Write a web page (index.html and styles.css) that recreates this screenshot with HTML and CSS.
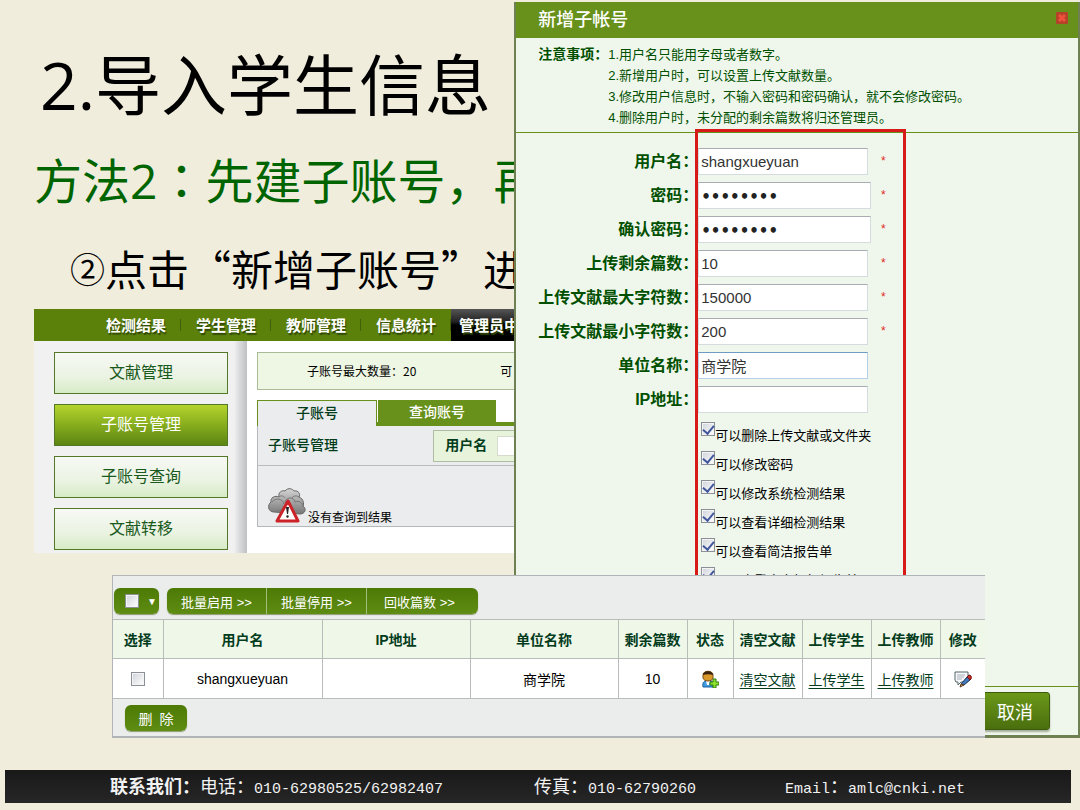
FILE: index.html
```html
<!DOCTYPE html>
<html lang="zh-CN">
<head>
<meta charset="utf-8">
<title>导入学生信息</title>
<link rel="stylesheet" href="styles.css">
</head>
<body>
<main class="slide">
  <section class="lesson">
    <h1 class="title">2.导入学生信息</h1>
    <h2 class="method">方法2<span class="colon" lang="zh-TW">：</span>先建子账号，再</h2>
    <p class="step"><span class="step-no">②</span><span>点击“新增子账号”进</span></p>

    <div class="app">
      <nav class="nav">
        <a class="nav-item" href="#">检测结果</a>
        <a class="nav-item" href="#">学生管理</a>
        <a class="nav-item" href="#">教师管理</a>
        <a class="nav-item" href="#">信息统计</a>
        <a class="nav-item current" href="#">管理员中</a>
      </nav>
      <div class="app-body">
        <aside class="side">
          <button class="side-btn" type="button">文献管理</button>
          <button class="side-btn active" type="button">子账号管理</button>
          <button class="side-btn" type="button">子账号查询</button>
          <button class="side-btn" type="button">文献转移</button>
        </aside>
        <div class="content">
          <div class="info"><span>子账号最大数量：20</span><span>可</span></div>
          <div class="tabs">
            <button class="tab selected" type="button">子账号</button>
            <button class="tab" type="button">查询账号</button>
          </div>
          <div class="panel">
            <div class="panel-head">
              <h3 class="panel-title">子账号管理</h3>
              <div class="search"><label for="q">用户名</label><input id="q" class="search-input" type="text"></div>
            </div>
            <div class="empty">
              <svg class="cloud" viewBox="0 0 38 36" aria-hidden="true">
                <defs><linearGradient id="cg" x1="0" y1="0" x2="0" y2="1"><stop offset="0" stop-color="#d4d4d4"/><stop offset="1" stop-color="#777"/></linearGradient></defs>
                <path d="M11 9C10 4 14 2 17 3C20-1 25 1 26 3C30 2 33 6 31 9C36 11 36 16 35 18C39 21 37 26 32 26L6 24C0 24-1 17 3 14C2 10 7 7 11 9Z" fill="url(#cg)" stroke="#666"/>
                <path d="M4 14C8 9 15 11 16 16M17 15C17 9 26 8 27 14C31 12 35 15 35 19M11 9C13 7 16 8 17 10M31 9C28 7 25 8 24 10M8 24C11 22 15 21 18 23" fill="none" stroke="#777"/>
                <path d="M20 13L30 33H9Z" fill="#fff" stroke="#cc2328" stroke-width="3" stroke-linejoin="round"/>
                <path d="M18 19h3l-1 7h-1z" fill="#222"/><circle cx="19.500" cy="28.500" r="1.200" fill="#222"/>
              </svg>
              <span>没有查询到结果</span>
            </div>
          </div>
        </div>
      </div>
    </div>
  </section>

  <section class="dialog">
    <header class="dialog-head">
      <h2 class="dialog-title">新增子帐号</h2>
      <button class="close" type="button" aria-label="关闭">
        <svg viewBox="0 0 12 12"><rect width="12" height="12" rx="1" fill="#b5432a"/><path d="M3 3L9 9M9 3L3 9" stroke="#f0503c" stroke-width="3"/></svg>
      </button>
    </header>
    <div class="notes">
      <strong>注意事项：</strong>
      <div>
        <p>1.用户名只能用字母或者数字。</p>
        <p>2.新增用户时，可以设置上传文献数量。</p>
        <p>3.修改用户信息时，不输入密码和密码确认，就不会修改密码。</p>
        <p>4.删除用户时，未分配的剩余篇数将归还管理员。</p>
      </div>
    </div>
    <form class="form">
      <div class="row"><label for="f1">用户名：</label><input id="f1" type="text" value="shangxueyuan"><i>*</i></div>
      <div class="row"><label for="f2">密码：</label><input id="f2" type="password" value="12345678"><i>*</i></div>
      <div class="row"><label for="f3">确认密码：</label><input id="f3" type="password" value="12345678"><i>*</i></div>
      <div class="row"><label for="f4">上传剩余篇数：</label><input id="f4" type="text" value="10"><i>*</i></div>
      <div class="row"><label for="f5">上传文献最大字符数：</label><input id="f5" type="text" value="150000"><i>*</i></div>
      <div class="row"><label for="f6">上传文献最小字符数：</label><input id="f6" type="text" value="200"><i>*</i></div>
      <div class="row"><label for="f7">单位名称：</label><input id="f7" class="focus" type="text" value="商学院"></div>
      <div class="row"><label for="f8">IP地址：</label><input id="f8" type="text"></div>
      <div class="rights">
        <label class="right"><input class="check" type="checkbox" checked><span>可以删除上传文献或文件夹</span></label>
        <label class="right"><input class="check" type="checkbox" checked><span>可以修改密码</span></label>
        <label class="right"><input class="check" type="checkbox" checked><span>可以修改系统检测结果</span></label>
        <label class="right"><input class="check" type="checkbox" checked><span>可以查看详细检测结果</span></label>
        <label class="right"><input class="check" type="checkbox" checked><span>可以查看简洁报告单</span></label>
        <label class="right"><input class="check" type="checkbox" checked><span>可以查看全文标红报告单</span></label>
      </div>
      <div class="highlight"></div>
    </form>
    <footer class="dialog-foot"><button class="cancel" type="button">取消</button></footer>
  </section>

  <section class="list">
    <div class="toolbar">
      <div class="pick"><input class="check" type="checkbox" aria-label="全选"><span>▼</span></div>
      <div class="batch">
        <button type="button">批量启用 &gt;&gt;</button>
        <button type="button">批量停用 &gt;&gt;</button>
        <button type="button">回收篇数 &gt;&gt;</button>
      </div>
    </div>
    <table class="table">
      <colgroup><col class="w-pick"><col class="w-name"><col class="w-unit"><col class="w-unit"><col class="w-act"><col class="w-icon"><col class="w-act"><col class="w-act"><col class="w-act"><col></colgroup>
      <thead>
        <tr><th>选择</th><th>用户名</th><th>IP地址</th><th>单位名称</th><th>剩余篇数</th><th>状态</th><th>清空文献</th><th>上传学生</th><th>上传教师</th><th>修改</th></tr>
      </thead>
      <tbody>
        <tr>
          <td><input class="check" type="checkbox" aria-label="选择 shangxueyuan"></td>
          <td>shangxueyuan</td><td></td><td>商学院</td><td>10</td>
          <td><svg class="icon" viewBox="0 0 18 18" aria-hidden="true">
            <path d="M2 17C1 13 3 11 5 11H10C13 12 13 15 12 17Z" fill="#3f9ae0" stroke="#1e5f9e"/>
            <path d="M5 11L6 15H8L9 11Z" fill="#fff"/>
            <path d="M2 5C2 0 12 0 12 5V8C11 12 3 12 2 8Z" fill="#d99a2b" stroke="#7a4a10"/>
            <path d="M2 5C2 0 12 0 12 5C9 4 5 4 2 5Z" fill="#3c2413"/>
            <path d="M12 9h3v3h3v3h-3v3h-3v-3H9v-3h3z" fill="#8be02c" stroke="#2c7a10"/>
          </svg></td>
          <td><a href="#">清空文献</a></td><td><a href="#">上传学生</a></td><td><a href="#">上传教师</a></td>
          <td><svg class="icon" viewBox="0 0 18 18" aria-hidden="true">
            <path d="M1 2H14V10L10 12H7L4 15V12H2L1 10Z" fill="#f6f7fb" stroke="#566"/>
            <path d="M3 5H11M3 7H10M3 9H8" stroke="#a8aeb8"/>
            <path d="M7 14L13 7L16 10L10 15Z" fill="#3e78b8" stroke="#1b3355"/>
            <path d="M13 7L15 5C17 5 18 7 17 9L16 10Z" fill="#c22b2b" stroke="#701515"/>
            <path d="M7 14L10 15L6 17Z" fill="#e8a35c" stroke="#5a3a1c"/>
          </svg></td>
        </tr>
      </tbody>
    </table>
    <div class="list-foot"><button class="delete" type="button">删&ensp;除</button></div>
  </section>
</main>

<footer class="contact">
  <span class="phone"><b>联系我们：</b>电话：<span class="mono">010-62980525/62982407</span></span>
  <span class="fax">传真：<span class="mono">010-62790260</span></span>
  <span><span class="mono">Email</span>：<span class="mono">amlc@cnki.net</span></span>
</footer>
</body>
</html>
```
FILE: styles.css
```css
* { box-sizing: border-box; }
body {
  margin: 0;
  background: #f0eddd;
  color: #000;
  font-family: "Liberation Sans", "Noto Sans CJK SC", sans-serif;
  font-size: 14px;
}
h1, h2, h3, p { margin: 0; font-weight: 400; }
button, input { font-family: inherit; }
button { padding: 0; border: 0; cursor: pointer; }

.slide {
  position: relative;
  display: grid;
  grid-template-columns: minmax(0, 10fr) minmax(0, 11fr);
  padding-top: 2px;
}

/* Lesson text */
.lesson {
  overflow: hidden;
  white-space: nowrap;
  padding-left: 34px;
  font-family: "Noto Sans CJK SC", sans-serif;
}
.title {
  padding: 36px 0 0 6px;
  font-family: "Open Sans", "Noto Sans CJK SC", sans-serif;
  font-size: 66px;
  line-height: 92px;
}
.method {
  margin-top: 14px;
  color: #006400;
  font-family: "Open Sans", "Noto Sans CJK SC", sans-serif;
  font-size: 48px;
  line-height: 68px;
}
.colon { font-family: "Noto Sans CJK TC", sans-serif; }
.step {
  display: flex;
  align-items: center;
  margin-top: 23px;
  padding-left: 36px;
  font-size: 42px;
  line-height: 60px;
}
.step-no { font-size: 35px; }

/* Account manager */
.app { margin-top: 11px; background: #fff; }
.nav {
  display: flex;
  height: 32px;
  padding-left: 57px;
  background: #5b810b;
}
.nav-item {
  flex: 0 0 90px;
  color: #fff;
  font-size: 15px;
  font-weight: 700;
  line-height: 32px;
  text-align: center;
  text-decoration: none;
  text-shadow: 1px 2px 1px #2f4704;
  background: linear-gradient(#41600a, #41600a) right center / 1px 12px no-repeat;
}
.nav-item.current {
  padding-left: 8px;
  text-align: left;
  background: linear-gradient(#555, #222 40%, #000 50%, #000);
}
.app-body { display: flex; }
.side {
  flex: 0 0 213px;
  display: flex;
  flex-direction: column;
  gap: 10px;
  padding: 11px 19px 3px 20px;
  background: linear-gradient(90deg, #f1f1f2 200px, #e0e1e3 204px, #bfc0c2);
}
.side-btn {
  height: 42px;
  padding-bottom: 4px;
  border: 1px solid #537828;
  background: linear-gradient(#f7f9f5, #eaf3e2 60%, #d7ebc6);
  color: #1a5a1c;
  font-size: 16px;
}
.side-btn.active {
  background: linear-gradient(#b5d32c, #8fb520 40%, #5c8512);
  color: #fff;
}
.content { flex: 1; min-width: 0; padding: 11px 0 0 10px; }
.info {
  display: flex;
  gap: 84px;
  height: 38px;
  padding-left: 49px;
  border: 1px solid #a9bb97;
  border-right: 0;
  background: #eef7e3;
  font-size: 12px;
  line-height: 36px;
}
.tabs {
  display: flex;
  gap: 1px;
  margin-top: 10px;
  background: linear-gradient(#67911a, #67911a) bottom / 100% 4px no-repeat;
}
.tab {
  width: 118px;
  height: 26px;
  padding-bottom: 4px;
  background: #67911a;
  color: #fff;
  font-size: 14px;
  font-weight: 500;
}
.tab.selected {
  width: 120px;
  border: 1px solid #67911a;
  border-bottom: 0;
  background: #ebeced;
  color: #033c1c;
}
.panel {
  border: 1px solid #b3b8bc;
  border-width: 0 0 1px 1px;
  background: #ebeced;
}
.panel-head {
  display: flex;
  align-items: center;
  justify-content: space-between;
  height: 40px;
  padding-left: 10px;
  border-bottom: 1px solid #b9bdc0;
}
.panel-title { padding-bottom: 4px; color: #033c1c; font-size: 14px; font-weight: 500; }
.search {
  display: flex;
  align-items: center;
  gap: 10px;
  width: 81px;
  height: 32px;
  padding-left: 11px;
  border: 1px solid #b0bda5;
  border-right: 0;
  background: #e8f3db;
  color: #033c1c;
  font-weight: 700;
}
.search label { padding-bottom: 4px; }
.search-input { width: 100%; min-width: 0; height: 20px; border: 1px solid #d4dbcd; border-right: 0; background: #fff; }
.empty {
  display: flex;
  align-items: flex-end;
  gap: 2px;
  height: 60px;
  padding: 0 0 2px 10px;
  font-size: 12px;
  line-height: 14px;
}
.cloud { width: 38px; height: 36px; }

/* Dialog */
.dialog {
  border: 2px solid #6f8152;
  border-top: 0;
  border-bottom-width: 3px;
  background: #eff7ec;
  color: #005000;
}
.dialog-head {
  display: flex;
  align-items: center;
  justify-content: space-between;
  height: 36px;
  padding: 0 10px 4px 22px;
  background: #67911a;
}
.dialog-title { color: #fff; font-size: 18px; font-weight: 500; }
.close { width: 12px; height: 12px; background: none; }
.close svg { display: block; }
.notes {
  display: flex;
  height: 95px;
  padding: 6px 0 0 22px;
  border-bottom: 1px solid #67911a;
  font-size: 13px;
  line-height: 21px;
  white-space: nowrap;
}
.notes strong { flex: 0 0 70px; font-size: 14px; }
.form { position: relative; padding: 11px 0 90px; }
.row { display: flex; align-items: center; height: 34px; }
.row label {
  flex: 0 0 182px;
  padding-bottom: 2px;
  font-size: 16px;
  font-weight: 700;
  text-align: right;
  white-space: nowrap;
}
.row input {
  width: 170px;
  height: 27px;
  padding: 0 2px;
  border: 1px solid #d5dcdf;
  border-top-color: #a9adb3;
  background: #fff;
  color: #333;
  font-size: 15px;
}
.row input[type="password"] {
  width: 173px;
  padding-top: 4px;
  color: #222;
  font-family: "DejaVu Sans", sans-serif;
  font-weight: 700;
}
.row .focus { border-color: #6f9cc4 #b5cfe7 #b5cfe7; }
.row i { width: 30px; margin-left: auto; margin-right: 167px; color: #e02a1c; font-size: 12px; font-style: normal; }
.rights { display: flex; flex-direction: column; padding: 6px 0 0 185px; }
.right {
  display: flex;
  align-items: flex-start;
  height: 29px;
  color: #000;
  font-size: 13px;
  line-height: 20px;
  white-space: nowrap;
}
.right span { padding-top: 4px; }
.check {
  appearance: none;
  flex: none;
  display: grid;
  place-items: center;
  width: 14px;
  height: 14px;
  margin: 0;
  border: 1px solid #8b9096;
  background: linear-gradient(135deg, #cfd3d9, #fff);
  box-shadow: inset 0 0 0 1px #f4f4f4;
}
.check:checked::after {
  content: "";
  width: 5px;
  height: 9px;
  margin-bottom: 2px;
  border: solid #40569c;
  border-width: 0 2px 2px 0;
  transform: rotate(40deg);
}
.highlight {
  position: absolute;
  top: -4px;
  bottom: 76px;
  left: 179px;
  width: 211px;
  border: 3px solid #d71a18;
  pointer-events: none;
}
.dialog-foot {
  display: flex;
  justify-content: flex-end;
  padding: 5px 28px 5px 0;
  border-top: 1px solid #67911a;
}
.cancel {
  width: 70px;
  height: 38px;
  border: 1px solid #3c5a0c;
  border-radius: 3px;
  background: linear-gradient(#6b9819, #4a6e0e);
  box-shadow: 0 2px 2px #a5ad9b;
  color: #fff;
  font-size: 18px;
}

/* Account list */
.list {
  position: absolute;
  right: 95px;
  bottom: 0;
  left: 112px;
  border: 1px solid #b1b5b8;
  border-width: 1px 0 2px 1px;
  background: #ebecec;
}
.toolbar { display: flex; gap: 8px; height: 43px; padding: 12px 0 0 1px; }
.pick, .batch, .delete {
  height: 26px;
  border-radius: 6px;
  background: linear-gradient(#4c7a05, #5f8c12);
  box-shadow: 0 1px 1px #8c9c72;
  color: #fff;
}
.pick { display: flex; align-items: center; gap: 8px; width: 45px; padding-left: 11px; font-size: 10px; }
.batch { display: flex; width: 311px; }
.batch button {
  flex: 0 0 100px;
  border-right: 1px solid #a5bd7c;
  background: none;
  color: #fff;
  font-size: 13px;
}
.batch button:last-child { flex: 1; padding-right: 6px; border-right: 0; }
.table { width: 100%; border-collapse: collapse; table-layout: fixed; }
.w-pick { width: 50px; }
.w-name { width: 159px; }
.w-unit { width: 148px; }
.w-act { width: 69px; }
.w-icon { width: 46px; }
.table th, .table td {
  height: 40px;
  padding: 0;
  border: 1px solid #b9bdba;
  text-align: center;
  white-space: nowrap;
}
.table th { height: 39px; background: #eff7e8; color: #033c1c; }
.table td { background: #fff; }
.table th:first-child, .table td:first-child { border-left: 0; }
.table th:last-child, .table td:last-child { border-right: 0; }
.table a { color: #033c1c; text-underline-offset: 3px; }
.table .check { margin: auto; }
.icon { display: block; width: 18px; height: 18px; margin: auto; }
.list-foot { height: 37px; padding: 6px 0 0 12px; }
.delete { width: 62px; font-size: 14px; }

/* Contact bar */
.contact {
  display: flex;
  height: 33px;
  margin: 32px 9px 7px 5px;
  padding-left: 105px;
  background: linear-gradient(#191919, #262626);
  color: #f2f2f2;
  font-size: 18px;
  line-height: 35px;
  white-space: nowrap;
}
.phone { flex: 0 0 424px; }
.fax { flex: 0 0 251px; }
.mono { font-family: "Liberation Mono", monospace; font-size: 15px; }
```
